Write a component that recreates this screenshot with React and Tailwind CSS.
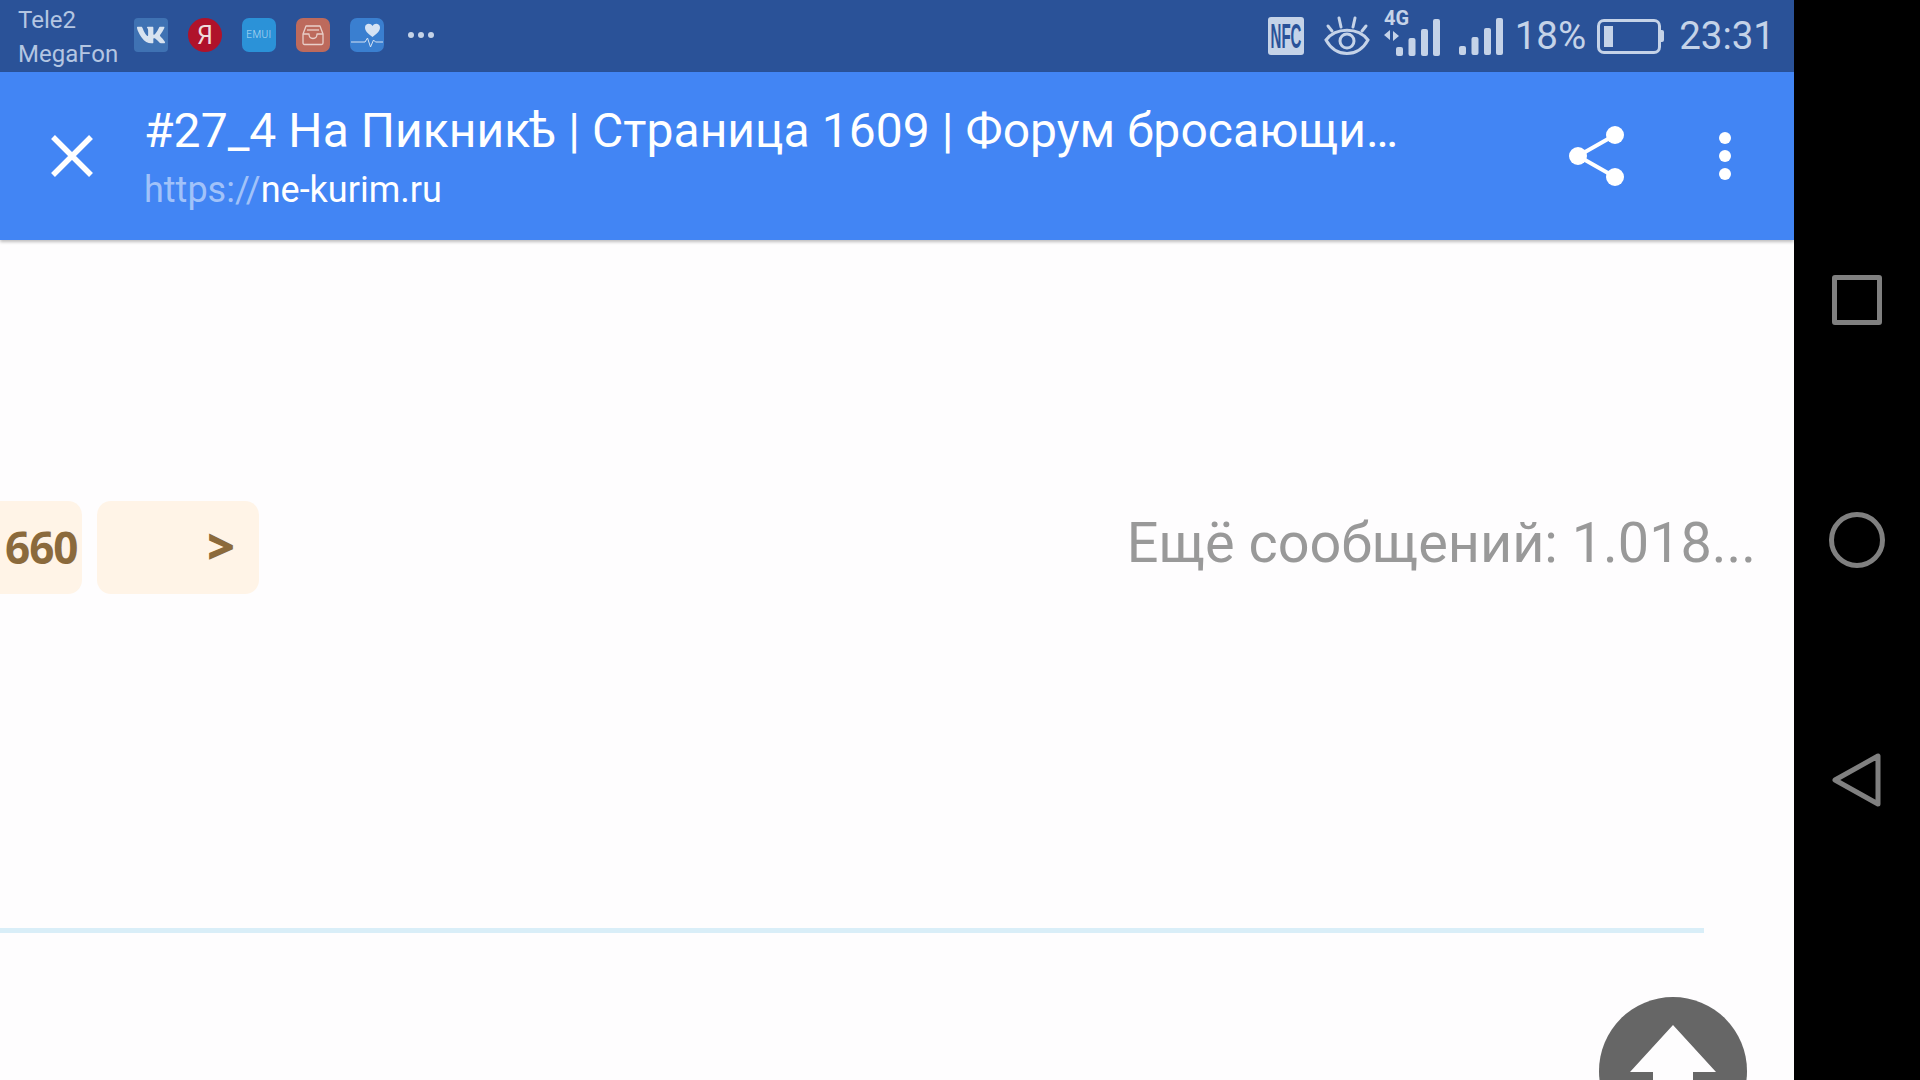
import { FaVk } from 'react-icons/fa'

const AppIcon = ({ className, children }) => (
  <div className={`w-[34px] h-[34px] flex items-center justify-center shrink-0 ${className}`}>{children}</div>
)

const StatusLeft = () => (
  <div className="flex items-center">
    <div className="w-[134px] pl-[18px] text-[24px] leading-[34px] text-[#b4c6e2] pt-[2px]">
      <div>Tele2</div>
      <div>MegaFon</div>
    </div>
    <div className="flex items-center gap-[20px] -mt-[2px]">
      <AppIcon className="rounded-[4px] bg-[#3f72b3]">
        <FaVk className="text-[#d8e3f0] text-[30px]" />
      </AppIcon>
      <AppIcon className="rounded-full bg-[#b0122a]">
        <span className="text-[#efdcdc] text-[25px] leading-none font-[Roboto]">Я</span>
      </AppIcon>
      <AppIcon className="rounded-[7px] bg-[#2b92d8]">
        <span className="text-[#b9dcf3] text-[10px] leading-none font-light tracking-[0.5px]">EMUI</span>
      </AppIcon>
      <AppIcon className="rounded-[7px] bg-[#bd6a5c]">
        <svg width="24" height="22" viewBox="0 0 24 22" fill="none" stroke="#e9cfc9" strokeWidth="1.3" strokeLinejoin="round">
          <path d="M5 2h14l3 8v9a1.5 1.5 0 0 1-1.5 1.5h-17A1.5 1.5 0 0 1 2 19v-9z" />
          <path d="M2 10h6c0 3 1.5 4.500 4 4.500s4-1.500 4-4.500h6" />
          <path d="M6 6h12" />
        </svg>
      </AppIcon>
      <AppIcon className="rounded-[7px] bg-[#3a7fd0]">
        <svg width="34" height="34" viewBox="0 0 34 34" fill="none">
          <path d="M22.500 19C17 15 15 12.500 15 9.500 15 5.500 20.500 4.500 22.500 8c2-3.500 7.500-2.500 7.500 1.500 0 3-2 5.500-7.500 9.500z" fill="#d5e3f4" />
          <path d="M1 24h14l2.500-4 3 9 3-7 2 2h7.500" stroke="#d5e3f4" strokeWidth="1" />
        </svg>
      </AppIcon>
      <div className="flex gap-[4px] ml-[4px]">
        <span className="w-[6px] h-[6px] rounded-full bg-[#c5d3e8]" />
        <span className="w-[6px] h-[6px] rounded-full bg-[#c5d3e8]" />
        <span className="w-[6px] h-[6px] rounded-full bg-[#c5d3e8]" />
      </div>
    </div>
  </div>
)

const Bars = () => (
  <g fill="#c5d3e8">
    <rect x="0" y="28" width="7" height="9" rx="2" />
    <rect x="12.500" y="19" width="7" height="18" rx="2" />
    <rect x="25" y="10" width="7" height="27" rx="2" />
    <rect x="37" y="0" width="7" height="37" rx="2" />
  </g>
)

const StatusRight = () => (
  <div className="flex items-center text-[#c5d3e8] pr-[19px]">
    <svg width="36" height="40" viewBox="0 0 36 40" className="mr-[20px]">
      <rect y="1" width="36" height="38" rx="3" fill="#c5d3e8" />
      <g transform="scale(0.43 1)">
        <text x="41.860" y="32.500" textAnchor="middle" fontSize="35" fontWeight="700" fontFamily="Liberation Sans" fill="#2a5298">NFC</text>
      </g>
    </svg>
    <svg width="46" height="40" viewBox="0 0 46 40" fill="none" stroke="#c5d3e8" strokeWidth="3" className="mr-[13px]">
      <path d="M2 24c10-13 32-13 42 0-10 18-32 18-42 0z" />
      <circle cx="23" cy="25" r="7" />
      <path d="M8 15 4 10M17 11l-2-9M29 11l2-9M38 15l4-5" strokeLinecap="round" />
    </svg>
    <svg width="57" height="49" viewBox="0 0 57 49" className="mr-[19px] -mt-[10px]">
      <text x="1" y="18" fontSize="20" fontWeight="700" fontFamily="Roboto" fill="#c5d3e8">4G</text>
      <path d="M7 23l-6 5 6 5zM10 34l6-5-6-5z" fill="#c5d3e8" />
      <g transform="translate(13 12)"><Bars /></g>
    </svg>
    <svg width="44" height="37" viewBox="0 0 44 37" className="mr-[12px]"><Bars /></svg>
    <span className="text-[38.500px] leading-none mr-[11px]">18%</span>
    <div className="flex items-center mr-[15px]">
      <div className="w-[64px] h-[35px] rounded-[7px] border-[3px] border-[#c5d3e8] p-[4px]">
        <div className="w-[9px] h-full bg-[#c5d3e8]" />
      </div>
      <div className="w-[3px] h-[12px] bg-[#c5d3e8] rounded-r-[2px]" />
    </div>
    <span className="text-[38.500px] leading-none">23:31</span>
  </div>
)

const Toolbar = () => (
  <div className="h-[168px] bg-[#4285f4] flex items-center shadow-[0_2px_3px_rgba(0,0,0,0.25)] relative z-10">
    <div className="w-[144px] pl-[50px] shrink-0">
      <svg width="44" height="44" viewBox="0 0 44 44" stroke="#fff" strokeWidth="5.500" fill="none">
        <path d="M3 3l38 38M41 3 3 41" />
      </svg>
    </div>
    <div className="flex-1 min-w-0 mt-[4px]">
      <div className="text-[48px] leading-[56px] tracking-[0.05px] text-white whitespace-nowrap">#27_4 На Пикникѣ | Страница 1609 | Форум бросающи…</div>
      <div className="text-[36px] leading-[46px] text-white mt-[8px]">
        <span className="text-[#a1c2f9]">https://</span>ne-kurim.ru
      </div>
    </div>
    <svg width="56" height="60" viewBox="0 0 56 60" className="mr-[94px] shrink-0" fill="#fff">
      <circle cx="9" cy="30" r="9" />
      <circle cx="46" cy="9" r="9" />
      <circle cx="46" cy="51" r="9" />
      <path d="M9 30 46 9M9 30l37 21" stroke="#fff" strokeWidth="4" />
    </svg>
    <div className="flex flex-col gap-[6px] mr-[63px] shrink-0">
      <span className="w-[12px] h-[12px] rounded-full bg-white" />
      <span className="w-[12px] h-[12px] rounded-full bg-white" />
      <span className="w-[12px] h-[12px] rounded-full bg-white" />
    </div>
  </div>
)

const Content = () => (
  <div className="flex-1 bg-[#fefdfe] relative overflow-hidden">
    <div className="pt-[261px] pr-[38px] flex items-center justify-between">
      <div className="flex gap-[15px] font-['Open_Sans'] font-bold text-[#8b6a3c]">
        <div className="w-[82px] h-[93px] bg-[#fff4e7] rounded-r-[14px] flex items-center pl-[5px] pb-[2px] text-[44px] tracking-[-1px]">660</div>
        <div className="w-[162px] h-[93px] bg-[#fff4e7] rounded-[14px] flex items-center justify-end pr-[24px] pb-[3px] text-[48px] font-extrabold">&gt;</div>
      </div>
      <div className="text-[55.800px] leading-none text-[#999999] -mt-[8px]">Ещё сообщений: 1.018...</div>
    </div>
    <div className="w-[1704px] h-[5px] bg-[#d9eef8] mt-[334px]" />
    <div className="absolute left-[1599px] top-[757px] w-[148px] h-[148px] rounded-full bg-[#666666] flex justify-center">
      <svg width="86" height="80" viewBox="0 0 86 80" className="mt-[28px]" fill="#fefdfe">
        <path d="M43 0 86 47H63v33H23V47H0z" />
      </svg>
    </div>
  </div>
)

const NavBar = () => (
  <div className="w-[126px] bg-black flex flex-col items-center shrink-0 pt-[275px]">
    <div className="w-[50px] h-[50px] rounded-[3px] border-[5px] border-[#808080]" />
    <div className="w-[56px] h-[56px] rounded-full border-[5px] border-[#808080] mt-[187px]" />
    <svg width="50" height="56" viewBox="0 0 50 56" fill="none" stroke="#808080" strokeWidth="5" strokeLinejoin="round" className="mt-[184px]">
      <path d="M46 4v48L3 28z" />
    </svg>
  </div>
)

export default function App() {
  return (
    <div className="w-[1920px] h-[1080px] flex overflow-hidden font-[Roboto]">
      <div className="flex-1 flex flex-col min-w-0">
        <div className="h-[72px] bg-[#2a5298] flex items-center justify-between shrink-0">
          <StatusLeft />
          <StatusRight />
        </div>
        <Toolbar />
        <Content />
      </div>
      <NavBar />
    </div>
  )
}
